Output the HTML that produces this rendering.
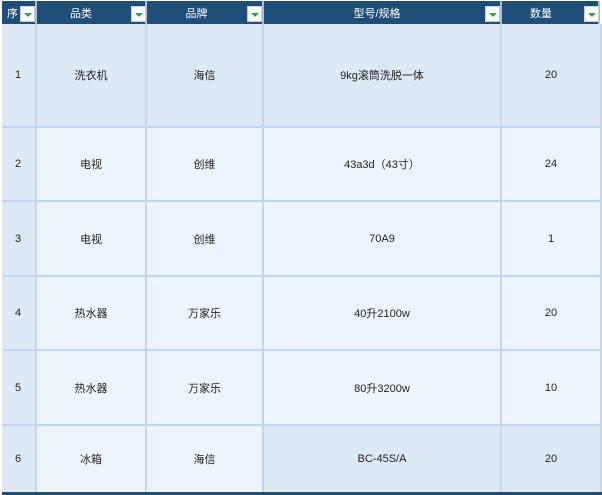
<!DOCTYPE html><html><head><meta charset="utf-8"><style>
body{margin:0;width:602px;height:495px;background:#fff;position:relative;overflow:hidden;font-family:"Liberation Sans","Noto Sans CJK SC",sans-serif;font-size:11px;color:#222}
.c{position:absolute;display:flex;align-items:center;justify-content:center;box-sizing:border-box;border-right:2px solid #c3d8ee;border-bottom:2px solid #c3d8ee}
.h{position:absolute;top:1px;height:23px;background:#1f4e79;color:#fff;display:flex;align-items:center;justify-content:center;box-sizing:border-box;border-right:2px solid #a9bfd6}
.f{position:absolute;top:6px;width:15px;height:16px;background:#fff;border:1px solid #ccc;box-sizing:border-box}
.f:after{content:"";position:absolute;left:3px;top:6px;border-left:4px solid transparent;border-right:4px solid transparent;border-top:4px solid #2aa05a}
</style></head><body>
<div class="h" style="left:2px;width:35px;justify-content:flex-start;padding-left:5px">序</div>
<div class="h" style="left:37px;width:110px;padding-right:20px">品类</div>
<div class="h" style="left:147px;width:117px;padding-right:16px">品牌</div>
<div class="h" style="left:264px;width:238px;padding-right:10px">型号/规格</div>
<div class="h" style="left:502px;width:98px;padding-right:18px">数量</div>
<div class="f" style="left:20px"></div><div class="f" style="left:131px"></div><div class="f" style="left:247px"></div><div class="f" style="left:485px"></div><div class="f" style="left:584px"></div>
<div id="g"></div>
<div style="position:absolute;left:2px;top:492px;width:600px;height:3px;background:#1f4e79"></div>
<script>
var rows=[[24,128,"1","洗衣机","海信","9kg滚筒洗脱一体","20"],[128,202,"2","电视","创维","43a3d（43寸）","24"],[202,277,"3","电视","创维","70A9","1"],[277,351,"4","热水器","万家乐","40升2100w","20"],[351,426,"5","热水器","万家乐","80升3200w","10"],[426,494,"6","冰箱","海信","BC-45S/A","20"]];
var cols=[[2,37],[37,147],[147,264],[264,502],[502,602]];var s="";
rows.forEach(function(r,i){cols.forEach(function(c,j){var bg=(j==0||i==0||(i==5&&j>=3))?"#ddeaf6":"#edf5fc";
s+='<div class="c" style="left:'+c[0]+'px;top:'+r[0]+'px;width:'+(c[1]-c[0])+'px;height:'+(r[1]-r[0])+'px;background:'+bg+(j==0?';justify-content:flex-start;padding-left:13px':'')+'">'+r[j+2]+'</div>';});});
document.getElementById("g").innerHTML=s;
</script>
</body></html>
